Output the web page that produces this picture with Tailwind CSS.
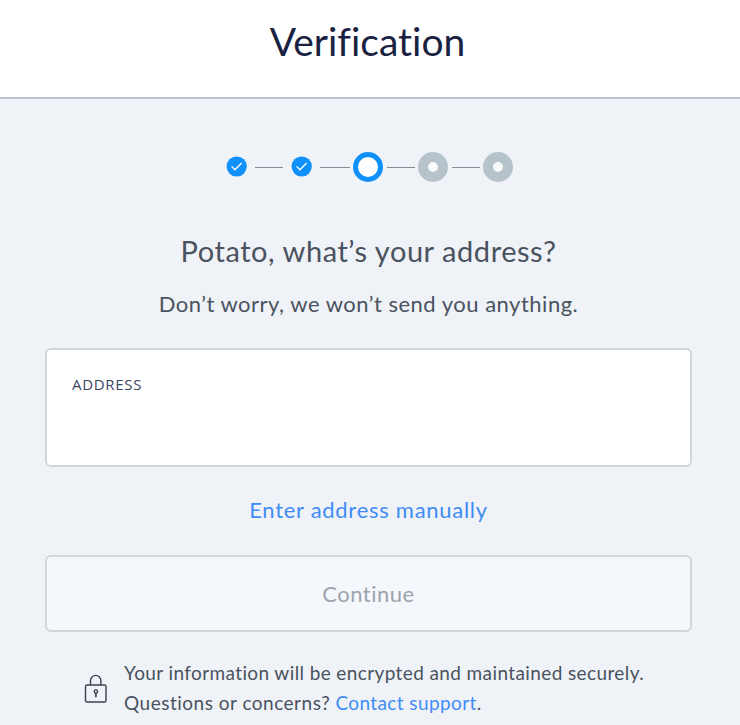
<!DOCTYPE html>
<html lang="en">

<head>
  <meta charset="UTF-8">
  <meta name="viewport" content="width=device-width, initial-scale=1.0">
  <title>Verification</title>
  <script src="https://cdn.jsdelivr.net/npm/@tailwindcss/browser@4"></script>
</head>

<body class="bg-[#eff2f7] h-screen overflow-hidden font-['Lato','Liberation_Sans',sans-serif] text-[#4a525f]">
  <header class="h-[99px] bg-white border-b-2 border-[#b9c5ce] flex justify-center pt-[17px] pr-[5px]">
    <h1 class="text-[39px] leading-[48px] text-[#1a2241] whitespace-nowrap [font-variant-ligatures:none]">Verification</h1>
  </header>

  <main class="pl-[45px] pr-[48px]">
    <!-- Progress steps -->
    <div class="flex items-center h-[30px] mt-[53px] pl-[181px]">
      <svg class="w-[21px] h-[21px] mb-px shrink-0" viewBox="0 0 21 21" fill="none">
        <circle cx="10.7" cy="10.5" r="10.1" fill="#1090fa" />
        <path d="M5.6 10.4l3.3 3.4 6.8-6.8" stroke="#fff" stroke-width="1.3" />
      </svg>
      <span class="w-7 h-px bg-[#868c95] ml-2 mr-2 shrink-0"></span>
      <svg class="w-[21px] h-[21px] mb-px shrink-0" viewBox="0 0 21 21" fill="none">
        <circle cx="10.7" cy="10.5" r="10.1" fill="#1090fa" />
        <path d="M5.6 10.4l3.3 3.4 6.8-6.8" stroke="#fff" stroke-width="1.3" />
      </svg>
      <span class="w-[30px] h-px bg-[#868c95] ml-2 mr-[3px] shrink-0"></span>
      <span class="size-[30px] rounded-full bg-white border-[5px] border-[#1090fa] shrink-0"></span>
      <span class="w-7 h-px bg-[#868c95] ml-[4px] mr-[3px] shrink-0"></span>
      <span class="size-[30px] rounded-full bg-[#f8fafc] border-[10px] border-[#b7c3cb] shrink-0"></span>
      <span class="w-7 h-px bg-[#868c95] ml-[4px] mr-[3px] shrink-0"></span>
      <span class="size-[30px] rounded-full bg-[#f8fafc] border-[10px] border-[#b7c3cb] shrink-0"></span>
    </div>

    <h2 class="mt-[49px] h-10 text-center text-[29px] leading-10 tracking-[0.55px] whitespace-nowrap">Potato, what’s your address?</h2>
    <p class="mt-[18px] h-[30px] text-center text-[22px] leading-[30px] tracking-[0.5px] whitespace-nowrap">Don’t worry, we won’t send you anything.</p>

    <label class="mt-[29px] h-[119px] bg-white border-2 border-[#cfd5dc] rounded-md flex px-[25px] pt-[24px]">
      <span class="font-['Open_Sans','Liberation_Sans',sans-serif] text-[15px] leading-5 tracking-[0.7px] text-[#3a4562]">ADDRESS</span>
    </label>

    <a href="#" class="block mt-[28px] h-[30px] text-center text-[22px] leading-[30px] tracking-[0.72px] text-[#3f8cf5]">Enter address manually</a>

    <button disabled class="block mt-[30px] w-full h-[77px] bg-[#f4f8fd] border-2 border-[#d0d6db] rounded-md text-[22px] tracking-[0.5px] text-[#9ca4ab]">Continue</button>

    <div class="flex mt-[26px] pl-[39px]">
      <svg class="w-6 h-[30px] mt-[16px] mr-[16px] shrink-0" viewBox="0 0 24 30" fill="none" stroke="#3a424c" stroke-width="1.4">
        <rect x="1.5" y="11" width="20.5" height="17" rx="1.6" />
        <path d="M6.5 11V6.6a5.2 5.2 0 0 1 10.4 0V11" />
        <circle cx="11.9" cy="17.6" r="1.7" />
        <path d="M11.9 19.3v4" stroke-width="1.7" />
      </svg>
      <p class="text-[19px] leading-[30px] tracking-[0.39px] whitespace-nowrap">
        Your information will be encrypted and maintained securely.<br>
        <span class="tracking-[0.5px]">Questions or concerns?</span> <a href="#" class="text-[#3f8cf5]">Contact support</a>.
      </p>
    </div>
  </main>
</body>

</html>
